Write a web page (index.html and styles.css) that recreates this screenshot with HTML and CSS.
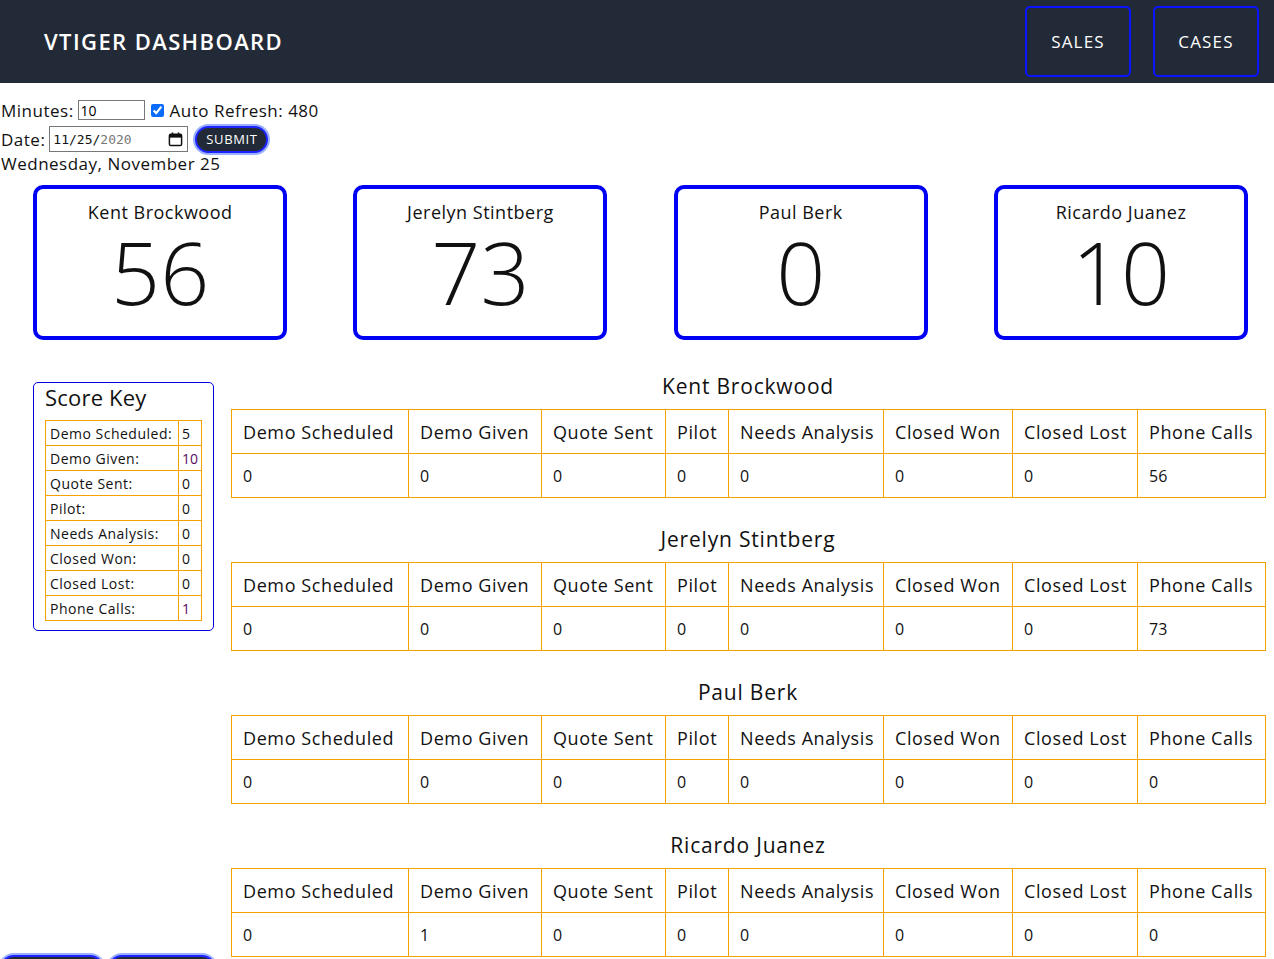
FILE: index.html
```html
<!DOCTYPE html>
<html>
<head>
<meta charset="utf-8">
<title>VTiger Dashboard</title>
<link rel="stylesheet" href="styles.css">
</head>
<body>
<header class="topbar">
  <div class="brand">VTIGER DASHBOARD</div>
  <nav class="nav">
    <a class="nav-btn">SALES</a>
    <a class="nav-btn">CASES</a>
  </nav>
</header>

<form class="controls">
  <div class="row">
    <label>Minutes:</label>
    <input class="min-input" type="text" value="10">
    <input class="chk" type="checkbox" checked>
    <span>Auto Refresh: 480</span>
  </div>
  <div class="row">
    <label>Date:</label>
    <span class="date-input"><span class="dv">11</span>/<span class="dv">25</span>/<span class="dv dim">2020</span>
      <svg class="cal" viewBox="0 0 16 16" width="15" height="15"><rect x="1.5" y="2.5" width="13" height="12" rx="1.5" fill="none" stroke="#111" stroke-width="1.6"/><rect x="1.5" y="2.5" width="13" height="3.5" fill="#111"/><rect x="4" y="0.5" width="1.6" height="3" fill="#111"/><rect x="10.4" y="0.5" width="1.6" height="3" fill="#111"/></svg>
    </span>
    <button type="button" class="submit">SUBMIT</button>
  </div>
  <div class="today">Wednesday, November 25</div>
</form>

<section class="cards">
  <div class="card-cell"><div class="card"><div class="card-name">Kent Brockwood</div><div class="card-num">56</div></div></div>
  <div class="card-cell"><div class="card"><div class="card-name">Jerelyn Stintberg</div><div class="card-num">73</div></div></div>
  <div class="card-cell"><div class="card"><div class="card-name">Paul Berk</div><div class="card-num">0</div></div></div>
  <div class="card-cell"><div class="card"><div class="card-name">Ricardo Juanez</div><div class="card-num">10</div></div></div>
</section>

<div class="content">
  <aside class="side">
    <div class="keybox">
      <div class="key-title">Score Key</div>
      <table class="key">
        <tr><td>Demo Scheduled:</td><td>5</td></tr>
        <tr><td>Demo Given:</td><td class="purple">10</td></tr>
        <tr><td>Quote Sent:</td><td>0</td></tr>
        <tr><td>Pilot:</td><td>0</td></tr>
        <tr><td>Needs Analysis:</td><td>0</td></tr>
        <tr><td>Closed Won:</td><td>0</td></tr>
        <tr><td>Closed Lost:</td><td>0</td></tr>
        <tr><td>Phone Calls:</td><td class="purple">1</td></tr>
      </table>
    </div>
    <div class="side-btns">
      <button type="button" class="pill p1">&nbsp;</button>
      <button type="button" class="pill p2">&nbsp;</button>
    </div>
  </aside>

  <main class="main">
    <div class="rep">
      <h2 class="rep-title">Kent Brockwood</h2>
      <table class="stats">
        <colgroup><col class="c1"><col class="c2"><col class="c3"><col class="c4"><col class="c5"><col class="c6"><col class="c7"><col class="c8"></colgroup>
        <tr><th>Demo Scheduled</th><th>Demo Given</th><th>Quote Sent</th><th>Pilot</th><th>Needs Analysis</th><th>Closed Won</th><th>Closed Lost</th><th>Phone Calls</th></tr>
        <tr><td>0</td><td>0</td><td>0</td><td>0</td><td>0</td><td>0</td><td>0</td><td>56</td></tr>
      </table>
    </div>
    <div class="rep">
      <h2 class="rep-title">Jerelyn Stintberg</h2>
      <table class="stats">
        <colgroup><col class="c1"><col class="c2"><col class="c3"><col class="c4"><col class="c5"><col class="c6"><col class="c7"><col class="c8"></colgroup>
        <tr><th>Demo Scheduled</th><th>Demo Given</th><th>Quote Sent</th><th>Pilot</th><th>Needs Analysis</th><th>Closed Won</th><th>Closed Lost</th><th>Phone Calls</th></tr>
        <tr><td>0</td><td>0</td><td>0</td><td>0</td><td>0</td><td>0</td><td>0</td><td>73</td></tr>
      </table>
    </div>
    <div class="rep">
      <h2 class="rep-title">Paul Berk</h2>
      <table class="stats">
        <colgroup><col class="c1"><col class="c2"><col class="c3"><col class="c4"><col class="c5"><col class="c6"><col class="c7"><col class="c8"></colgroup>
        <tr><th>Demo Scheduled</th><th>Demo Given</th><th>Quote Sent</th><th>Pilot</th><th>Needs Analysis</th><th>Closed Won</th><th>Closed Lost</th><th>Phone Calls</th></tr>
        <tr><td>0</td><td>0</td><td>0</td><td>0</td><td>0</td><td>0</td><td>0</td><td>0</td></tr>
      </table>
    </div>
    <div class="rep">
      <h2 class="rep-title">Ricardo Juanez</h2>
      <table class="stats">
        <colgroup><col class="c1"><col class="c2"><col class="c3"><col class="c4"><col class="c5"><col class="c6"><col class="c7"><col class="c8"></colgroup>
        <tr><th>Demo Scheduled</th><th>Demo Given</th><th>Quote Sent</th><th>Pilot</th><th>Needs Analysis</th><th>Closed Won</th><th>Closed Lost</th><th>Phone Calls</th></tr>
        <tr><td>0</td><td>1</td><td>0</td><td>0</td><td>0</td><td>0</td><td>0</td><td>0</td></tr>
      </table>
    </div>
  </main>
</div>
</body>
</html>
```

FILE: styles.css
```css
* { box-sizing: border-box; }

body {
  margin: 0;
  font-family: "Open Sans", "DejaVu Sans", sans-serif;
  color: #111;
  background: #fff;
  overflow: hidden;
}

.topbar {
  height: 83px;
  background: #232a37;
  display: flex;
  align-items: center;
  justify-content: space-between;
  padding: 0 15px 0 44px;
}

.brand {
  color: #fff;
  font-size: 22px;
  font-weight: 600;
  letter-spacing: 1.4px;
  margin-top: -2px;
}

.nav {
  display: flex;
  gap: 22px;
  align-self: flex-start;
  margin-top: 6px;
}

.nav-btn {
  width: 106px;
  height: 71px;
  border: 2px solid #0a14ff;
  border-radius: 5px;
  color: #fff;
  font-size: 17px;
  letter-spacing: 1.2px;
  display: flex;
  align-items: center;
  justify-content: center;
}

.controls {
  padding: 15px 0 0 1px;
  font-size: 17px;
  letter-spacing: 0.5px;
}

.row {
  display: flex;
  align-items: center;
  height: 24px;
  gap: 4px;
}

.row + .row { margin-top: 5px; }

.min-input {
  width: 67px;
  height: 20px;
  border: 1px solid #777;
  font-family: "Open Sans", sans-serif;
  font-size: 14px;
  padding: 0 2px;
}

.chk {
  margin: 0 2px 0 2px;
  width: 13px;
  height: 13px;
  accent-color: #0a6cff;
}

.date-input {
  width: 139px;
  height: 26px;
  border: 1px solid #777;
  display: flex;
  align-items: center;
  padding: 0 2px 0 3px;
  font-family: "DejaVu Sans Mono", monospace;
  font-size: 13px;
  letter-spacing: 0;
  color: #111;
}

.date-input .dim { color: #777; }

.cal { margin-left: auto; margin-right: 2px; }

.submit {
  margin-left: 3px;
  height: 27px;
  padding: 0 9px;
  background: #232a37;
  color: #fff;
  border: 2px solid #1d24ff;
  border-radius: 14px;
  box-shadow: 0 0 0 2px #9ab0ff;
  font-family: "Open Sans", sans-serif;
  font-size: 13px;
  letter-spacing: 0.6px;
}

.today { margin-top: 1px; }

.cards {
  display: grid;
  grid-template-columns: repeat(4, 320.3px);
  margin-top: 10px;
}

.card-cell { display: flex; justify-content: center; }

.card {
  width: 254px;
  height: 155px;
  border: 4px solid #0000f5;
  border-radius: 10px;
  text-align: center;
}

.card-name {
  font-size: 18px;
  line-height: 24px;
  margin-top: 11px;
  letter-spacing: 0.5px;
}

.card-num {
  font-size: 86px;
  font-weight: 300;
  line-height: 80px;
  margin-top: 8px;
}

.content {
  display: flex;
  margin-top: 33px;
}

.side {
  width: 231px;
  flex: none;
  padding-left: 33px;
  padding-top: 9px;
}

.keybox {
  width: 181px;
  border: 1px solid #0000e0;
  border-radius: 5px;
  padding: 0 11px 9px 11px;
}

.key-title {
  font-size: 22px;
  line-height: 26px;
  margin: 1px 0 10px 0;
  letter-spacing: 0.2px;
}

.key {
  border-collapse: collapse;
  width: 157px;
  font-size: 14px;
}

.key td {
  border: 1px solid #f5a200;
  height: 25px;
  padding: 0 4px;
  white-space: nowrap;
  letter-spacing: 0.5px;
}

.key td + td { padding: 0 3px; width: 23px; letter-spacing: 0; }

.purple { color: #5a0a5e; }

.side-btns {
  margin-top: 324px;
  margin-left: -33px;
  display: flex;
  gap: 4px;
}

.pill {
  height: 30px;
  background: #232a37;
  border: 2px solid #1d24ff;
  border-radius: 14px;
  box-shadow: 0 0 0 2px #9ab0ff;
}

.p1 { width: 104px; }
.p2 { width: 108px; }

.main {
  width: 1034px;
  flex: none;
}

.rep { margin-bottom: 28px; }

.rep-title {
  margin: 0 0 10px 0;
  text-align: center;
  font-size: 21px;
  font-weight: 500;
  line-height: 26px;
  letter-spacing: 0.8px;
}

.stats {
  width: 100%;
  border-collapse: collapse;
  table-layout: fixed;
}

.stats th, .stats td {
  border: 1px solid #f5a200;
  height: 44px;
  padding: 0 11px;
  text-align: left;
  white-space: nowrap;
  overflow: hidden;
}

.stats th { font-size: 18px; font-weight: 400; letter-spacing: 0.6px; }
.stats td { font-size: 16px; }

.c1 { width: 177px; }
.c2 { width: 133px; }
.c3 { width: 124px; }
.c4 { width: 63px; }
.c5 { width: 155px; }
.c6 { width: 129px; }
.c7 { width: 125px; }
.c8 { width: 128px; }
```
